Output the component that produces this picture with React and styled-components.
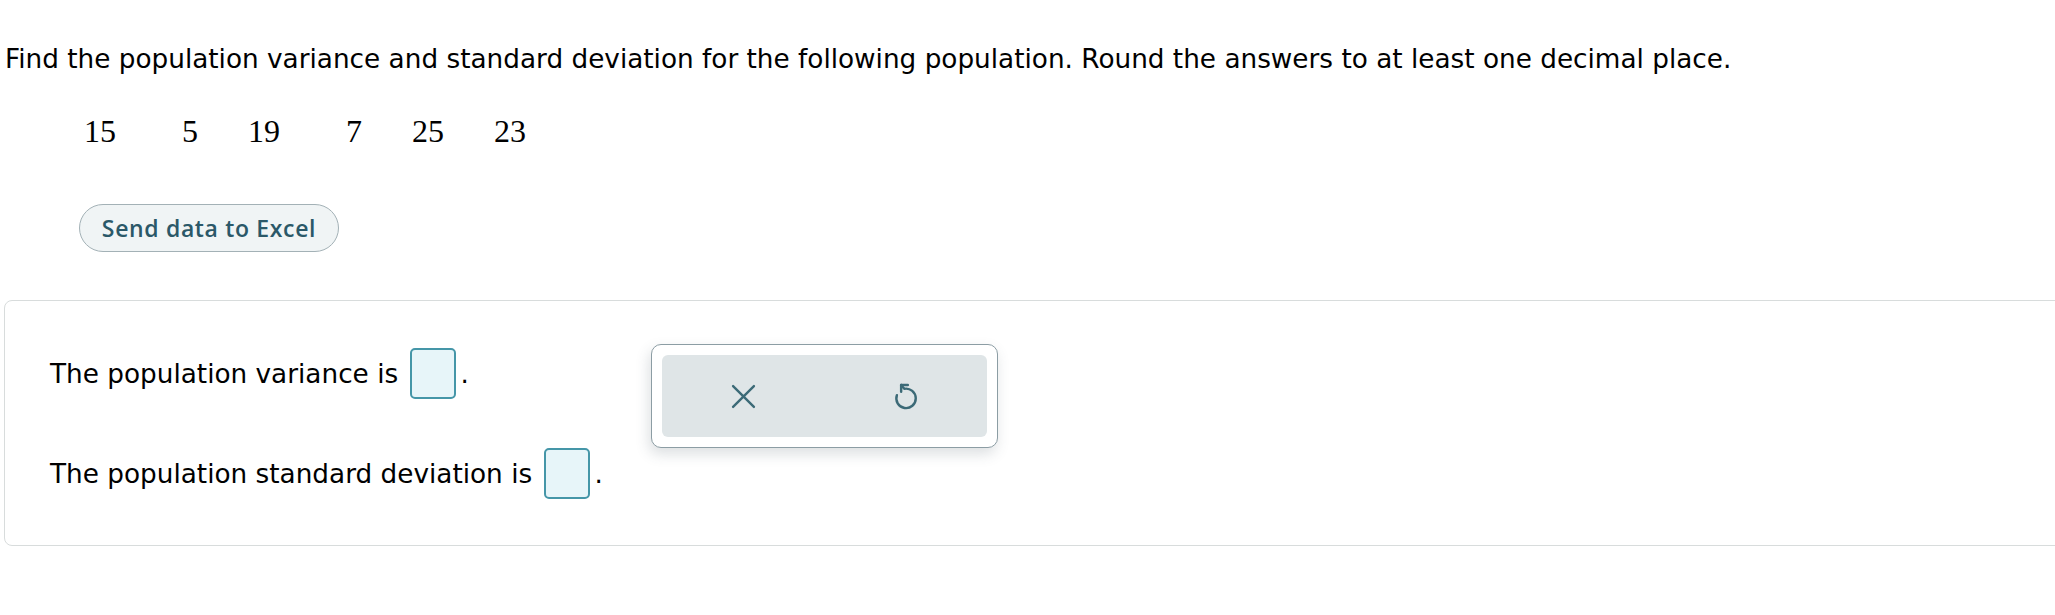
import React from "react";
import styled, { createGlobalStyle } from "styled-components";

const Global = createGlobalStyle`
  html, body { margin: 0; padding: 0; background: #fff; overflow: hidden; }
  body { font-family: "DejaVu Sans", Verdana, sans-serif; color: #000; }
`;

const Page = styled.div`
  padding: 41px 0 0 5px;
  width: 2100px;
`;

const Prompt = styled.p`
  margin: 0;
  font-size: 26.3px;
  line-height: 36px;
  color: #000;
`;

const DataRow = styled.div`
  display: grid;
  grid-template-columns: repeat(6, 82px);
  margin: 35px 0 0 29px;
  font-family: "Liberation Serif", "Times New Roman", serif;
  font-size: 32px;
  line-height: 38px;
`;

const Datum = styled.span`
  text-align: right;
`;

const ExcelButton = styled.button`
  display: flex;
  align-items: center;
  justify-content: center;
  margin: 54px 0 0 74px;
  width: 260px;
  height: 48px;
  border: 1px solid #a3b1b6;
  border-radius: 24px;
  background: #f0f4f5;
  color: #2b5868;
  font-family: "Open Sans", sans-serif;
  font-weight: 600;
  font-size: 23px;
  letter-spacing: 0.65px;
  padding: 0;
`;

const AnswerPanel = styled.div`
  display: flex;
  align-items: flex-start;
  margin: 48px 0 0 -1px;
  width: 2100px;
  box-sizing: border-box;
  border: 1px solid #d8dcdc;
  border-radius: 8px;
  padding: 47px 0 46px 45px;
`;

const QuestionColumn = styled.div`
  display: flex;
  flex-direction: column;
  gap: 49px;
  width: 601px;
`;

const AnswerLine = styled.div`
  display: flex;
  align-items: center;
  height: 51px;
  font-size: 26.3px;
  color: #000;
  white-space: pre;
`;

const AnswerBox = styled.span`
  display: inline-block;
  box-sizing: border-box;
  width: 46px;
  height: 51px;
  margin: 0 5px 0 3px;
  border: 2px solid #4596a8;
  border-radius: 5px;
  background: #e7f5f9;
`;

const Palette = styled.div`
  margin-top: -4px;
  box-sizing: border-box;
  width: 347px;
  height: 104px;
  padding: 10px;
  background: #fff;
  border: 1px solid #8c9da4;
  border-radius: 10px;
  box-shadow: -2px 6px 14px rgba(60, 80, 90, 0.18);
`;

const PaletteInner = styled.div`
  display: flex;
  height: 100%;
  background: #dfe5e7;
  border-radius: 6px;
`;

const PaletteButton = styled.button`
  flex: 1;
  display: flex;
  align-items: center;
  justify-content: center;
  border: none;
  background: transparent;
  padding: 0;
  color: #3c6a77;
`;

const CloseIcon = () => (
  <svg width="25" height="25" viewBox="0 0 24 24" fill="none" stroke="currentColor" strokeWidth="2.3" strokeLinecap="round">
    <path d="M2 2 L22 22 M22 2 L2 22" />
  </svg>
);

const ResetIcon = () => (
  <svg width="32" height="34" viewBox="0 0 26 28" fill="none" stroke="currentColor" strokeWidth="2" strokeLinecap="round" strokeLinejoin="round">
    <path d="M5.5 13.3 A8 8 0 1 0 11.6 8.1 L9 5" />
    <path d="M9 5 H14.5" />
    <path d="M9 5 V10.5" />
  </svg>
);

const values = [15, 5, 19, 7, 25, 23];

export default function App() {
  return (
    <>
      <Global />
      <Page>
        <Prompt>
          Find the population variance and standard deviation for the following population. Round the answers to at least one decimal place.
        </Prompt>
        <DataRow>
          {values.map((v, i) => (
            <Datum key={i}>{v}</Datum>
          ))}
        </DataRow>
        <ExcelButton>Send data to Excel</ExcelButton>
        <AnswerPanel>
          <QuestionColumn>
            <AnswerLine>
              The population variance is <AnswerBox />.
            </AnswerLine>
            <AnswerLine>
              The population standard deviation is <AnswerBox />.
            </AnswerLine>
          </QuestionColumn>
          <Palette>
            <PaletteInner>
              <PaletteButton aria-label="Clear">
                <CloseIcon />
              </PaletteButton>
              <PaletteButton aria-label="Reset">
                <ResetIcon />
              </PaletteButton>
            </PaletteInner>
          </Palette>
        </AnswerPanel>
      </Page>
    </>
  );
}
